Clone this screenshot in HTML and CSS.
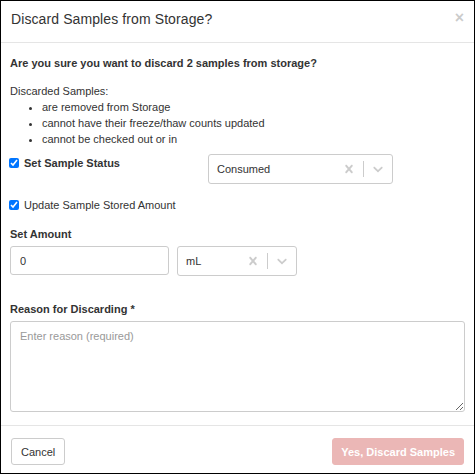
FILE: index.html
```html
<!DOCTYPE html>
<html lang="en">
<head>
    <meta charset="UTF-8">
    <meta name="viewport" content="width=device-width, initial-scale=1.0">
    <title>Discard Samples from Storage?</title>
    <link rel="stylesheet" href="styles.css">
</head>
<body>
    <div class="modal">
        <div class="modal-header">
            <h4 class="modal-title">Discard Samples from Storage?</h4>
            <button class="close" type="button">&times;</button>
        </div>

        <div class="modal-body">
            <p class="question">Are you sure you want to discard 2 samples from storage?</p>

            <div class="notes">Discarded Samples:</div>
            <ul class="notes-list">
                <li>are removed from Storage</li>
                <li>cannot have their freeze/thaw counts updated</li>
                <li>cannot be checked out or in</li>
            </ul>

            <div class="status-row">
                <label class="check bold"><input type="checkbox" checked> Set Sample Status</label>
                <div class="select status-select">
                    <span class="select-value">Consumed</span>
                    <span class="indicator">
                        <svg viewBox="0 0 20 20"><path d="M14.348 14.849c-0.469 0.469-1.229 0.469-1.697 0l-2.651-3.030-2.651 3.029c-0.469 0.469-1.229 0.469-1.697 0-0.469-0.469-0.469-1.229 0-1.697l2.758-3.15-2.759-3.152c-0.469-0.469-0.469-1.228 0-1.697s1.228-0.469 1.697 0l2.652 3.031 2.651-3.031c0.469-0.469 1.228-0.469 1.697 0s0.469 1.229 0 1.697l-2.758 3.152 2.758 3.15c0.469 0.469 0.469 1.229 0 1.698z"/></svg>
                    </span>
                    <span class="separator"></span>
                    <span class="indicator">
                        <svg viewBox="0 0 20 20"><path d="M4.516 7.548c0.436-0.446 1.043-0.481 1.576 0l3.908 3.747 3.908-3.747c0.533-0.481 1.141-0.446 1.574 0 0.436 0.445 0.408 1.197 0 1.615-0.406 0.418-4.695 4.502-4.695 4.502-0.217 0.223-0.502 0.335-0.787 0.335s-0.57-0.112-0.789-0.335c0 0-4.287-4.084-4.695-4.502s-0.436-1.170 0-1.615z"/></svg>
                    </span>
                </div>
            </div>

            <label class="check amount-check"><input type="checkbox" checked> Update Sample Stored Amount</label>

            <div class="field-label">Set Amount</div>
            <div class="amount-row">
                <input class="form-control" type="text" value="0">
                <div class="select unit-select">
                    <span class="select-value">mL</span>
                    <span class="indicator">
                        <svg viewBox="0 0 20 20"><path d="M14.348 14.849c-0.469 0.469-1.229 0.469-1.697 0l-2.651-3.030-2.651 3.029c-0.469 0.469-1.229 0.469-1.697 0-0.469-0.469-0.469-1.229 0-1.697l2.758-3.15-2.759-3.152c-0.469-0.469-0.469-1.228 0-1.697s1.228-0.469 1.697 0l2.652 3.031 2.651-3.031c0.469-0.469 1.228-0.469 1.697 0s0.469 1.229 0 1.697l-2.758 3.152 2.758 3.15c0.469 0.469 0.469 1.229 0 1.698z"/></svg>
                    </span>
                    <span class="separator"></span>
                    <span class="indicator">
                        <svg viewBox="0 0 20 20"><path d="M4.516 7.548c0.436-0.446 1.043-0.481 1.576 0l3.908 3.747 3.908-3.747c0.533-0.481 1.141-0.446 1.574 0 0.436 0.445 0.408 1.197 0 1.615-0.406 0.418-4.695 4.502-4.695 4.502-0.217 0.223-0.502 0.335-0.787 0.335s-0.57-0.112-0.789-0.335c0 0-4.287-4.084-4.695-4.502s-0.436-1.170 0-1.615z"/></svg>
                    </span>
                </div>
            </div>

            <div class="field-label reason-label">Reason for Discarding *</div>
            <textarea class="form-control reason" placeholder="Enter reason (required)"></textarea>
        </div>

        <div class="modal-footer">
            <button class="btn" type="button">Cancel</button>
            <button class="btn btn-danger" type="button" disabled>Yes, Discard Samples</button>
        </div>
    </div>
</body>
</html>
```

FILE: styles.css
```css
* { box-sizing: border-box; }
body { margin: 0; font-family: "Liberation Sans", Arial, sans-serif; font-size: 11px; line-height: 16px; color: #333; background: #fff; }

.modal { width: 475px; height: 474px; border: 1px solid #000; background: #fff; }

.modal-header { display: flex; justify-content: space-between; align-items: flex-start; padding: 8px 10px 13px; border-bottom: 1px solid #e5e5e5; }
.modal-title { margin: 0; font-size: 14px; line-height: 20px; font-weight: normal; letter-spacing: .1px; }
.close { margin: 2px 0 0 0; padding: 0; border: none; background: none; font-family: inherit; font-size: 16px; line-height: 14px; font-weight: bold; color: #000; opacity: .2; cursor: pointer; }

.modal-body { padding: 12px 9px 13px; }
.question { margin: 0 0 12px; font-weight: bold; }
.notes-list { margin: 0; padding-left: 32px; }

.status-row { display: grid; grid-template-columns: 198px 185px; align-items: start; margin-top: 7px; }
.check { display: flex; align-items: center; gap: 5px; padding-top: 1px; }
.check input { width: 10px; height: 10px; margin: 0 0 0 -1px; }
.bold { font-weight: bold; }
.amount-check { margin-top: 13px; padding-top: 0; }

.field-label { font-weight: bold; margin-top: 13px; margin-bottom: 4px; }
.reason-label { margin-top: 25px; }

.amount-row { display: grid; grid-template-columns: 159px 120px; gap: 8px; }

.form-control { display: block; width: 100%; height: 29px; padding: 0 9px; border: 1px solid #ccc; border-radius: 3px; font-family: inherit; font-size: 11px; color: #333; background: #fff; }
.reason { height: 91px; padding: 6px 9px; line-height: 16px; resize: vertical; }
.reason::placeholder { color: #999; }

.select { display: flex; align-items: center; height: 30px; border: 1px solid #ccc; border-radius: 3px; background: #fff; }
.select-value { flex: 1; padding-left: 8px; color: #333; }
.indicator { display: flex; align-items: center; justify-content: center; width: 28px; height: 100%; }
.indicator svg { width: 16px; height: 16px; fill: #ccc; }
.separator { width: 1px; align-self: stretch; margin: 6px 0; background: #ccc; }

.modal-footer { display: flex; justify-content: space-between; padding: 12px 10px; border-top: 1px solid #e5e5e5; }
.btn { height: 27px; padding: 0 9px; border: 1px solid #ccc; border-radius: 3px; background: #fff; font-family: inherit; font-size: 11px; color: #333; cursor: pointer; }
.btn-danger { padding: 0 8px; border-color: #ebb7b6; background: #ebb7b6; color: #fff; font-weight: bold; }
.btn-danger:disabled { cursor: not-allowed; }
```
